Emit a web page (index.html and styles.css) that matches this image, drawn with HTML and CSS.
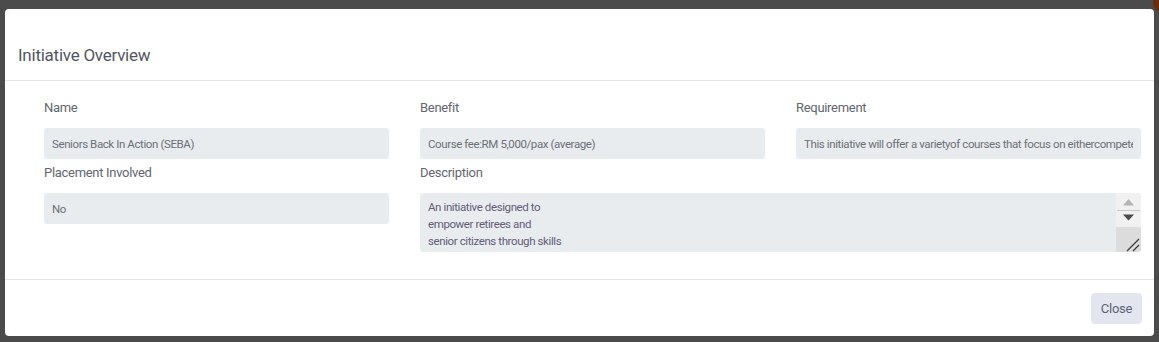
FILE: index.html
```html
<!DOCTYPE html>
<html lang="en">
<head>
    <meta charset="UTF-8">
    <meta name="viewport" content="width=device-width, initial-scale=1.0">
    <title>Initiative Overview</title>
    <link rel="stylesheet" href="styles.css">
</head>
<body>

    <div class="backdrop">
        <span class="avatar"></span>

        <div class="modal">
            <div class="modal-header">
                <h5 class="modal-title">Initiative Overview</h5>
            </div>

            <div class="modal-body">
                <div class="field">
                    <label for="name">Name</label>
                    <input id="name" class="form-control" type="text" value="Seniors Back In Action (SEBA)" readonly>
                </div>

                <div class="field">
                    <label for="benefit">Benefit</label>
                    <input id="benefit" class="form-control" type="text" value="Course fee:RM 5,000/pax (average)" readonly>
                </div>

                <div class="field">
                    <label for="requirement">Requirement</label>
                    <input id="requirement" class="form-control" type="text" value="This initiative will offer a varietyof courses that focus on eithercompetency or skill upgrading" readonly>
                </div>

                <div class="field">
                    <label for="placement">Placement Involved</label>
                    <input id="placement" class="form-control" type="text" value="No" readonly>
                </div>

                <div class="field wide">
                    <label>Description</label>
                    <div class="textarea">
                        <div class="textarea-text">
                            An initiative designed to<br>
                            empower retirees and<br>
                            senior citizens through skills
                        </div>
                        <div class="scrollbar">
                            <div class="scroll-arrows">
                                <svg width="25" height="34" viewBox="0 0 25 34">
                                    <polygon points="7,12.5 18,12.5 12.5,6" fill="#b4b4b4"/>
                                    <line x1="1" y1="17.5" x2="24" y2="17.5" stroke="#c8c8c8" stroke-width="1"/>
                                    <polygon points="7,21.5 18,21.5 12.5,27.5" fill="#4a4a4a"/>
                                </svg>
                            </div>
                            <div class="resizer">
                                <svg width="25" height="25" viewBox="0 0 25 25">
                                    <line x1="23" y1="12" x2="11" y2="24" stroke="#3a3a3a" stroke-width="1.2"/>
                                    <line x1="23" y1="18" x2="17" y2="24" stroke="#3a3a3a" stroke-width="1.2"/>
                                </svg>
                            </div>
                        </div>
                    </div>
                </div>
            </div>

            <div class="modal-footer">
                <button class="btn">Close</button>
            </div>
        </div>
    </div>

</body>
</html>
```
FILE: styles.css
```css
body {
    margin: 0;
    height: 342px;
    overflow: hidden;
    background-color: #4b4b4b;
    font-family: Roboto, Arial, sans-serif;
    color: #5e6278;
}

.backdrop {
    position: relative;
    padding: 9px 5px 0 5px;
}

.avatar {
    position: absolute;
    top: -6px;
    right: -12px;
    width: 18px;
    height: 18px;
    border-radius: 50%;
    background-color: #6b2d0c;
}

.modal {
    height: 327px;
    background-color: #fff;
    border-radius: 4px;
    display: flex;
    flex-direction: column;
}

.modal-header {
    height: 72px;
    box-sizing: border-box;
    padding: 34px 13px 0;
    border-bottom: 1px solid #e3e5ea;
}

.modal-title {
    margin: 0;
    font-size: 17px;
    font-weight: 400;
    line-height: 24px;
    letter-spacing: -0.25px;
    color: #53565f;
}

.modal-body {
    height: 198px;
    box-sizing: border-box;
    padding: 18px 13px 0 39px;
    display: grid;
    grid-template-columns: repeat(3, 1fr);
    grid-template-rows: auto auto;
    align-content: start;
    column-gap: 31px;
    row-gap: 5px;
}

.field {
    display: flex;
    flex-direction: column;
    min-width: 0;
}

.field.wide {
    grid-column: span 2;
}

label {
    font-size: 13px;
    line-height: 18px;
    letter-spacing: -0.3px;
    margin-bottom: 11px;
    color: #62666f;
}

.form-control {
    width: 100%;
    height: 31px;
    box-sizing: border-box;
    padding: 0 8px;
    border: none;
    border-radius: 3px;
    background-color: #e9ecef;
    font-family: Roboto, Arial, sans-serif;
    font-size: 11.5px;
    letter-spacing: -0.4px;
    color: #6c7079;
    outline: none;
}

.textarea {
    height: 59px;
    display: flex;
    background-color: #e9ecef;
    border-radius: 3px;
    overflow: hidden;
}

.textarea-text {
    flex: 1;
    padding: 6px 8px;
    font-size: 11.5px;
    line-height: 17px;
    letter-spacing: -0.4px;
    color: #625c7a;
}

.scrollbar {
    width: 25px;
    display: flex;
    flex-direction: column;
}

.scroll-arrows {
    height: 34px;
    background-color: #f1f1f1;
}

.resizer {
    height: 25px;
    background-color: #dcdcdc;
}

.scrollbar svg {
    display: block;
}

.modal-footer {
    height: 57px;
    box-sizing: border-box;
    border-top: 1px solid #e3e5ea;
    padding: 13px 12px 0;
    display: flex;
    justify-content: flex-end;
    align-items: flex-start;
}

.btn {
    width: 51px;
    height: 31px;
    border: none;
    border-radius: 4px;
    background-color: #e4e6ef;
    font-family: Roboto, Arial, sans-serif;
    font-size: 13px;
    letter-spacing: -0.2px;
    color: #5e6278;
    cursor: pointer;
}
```
